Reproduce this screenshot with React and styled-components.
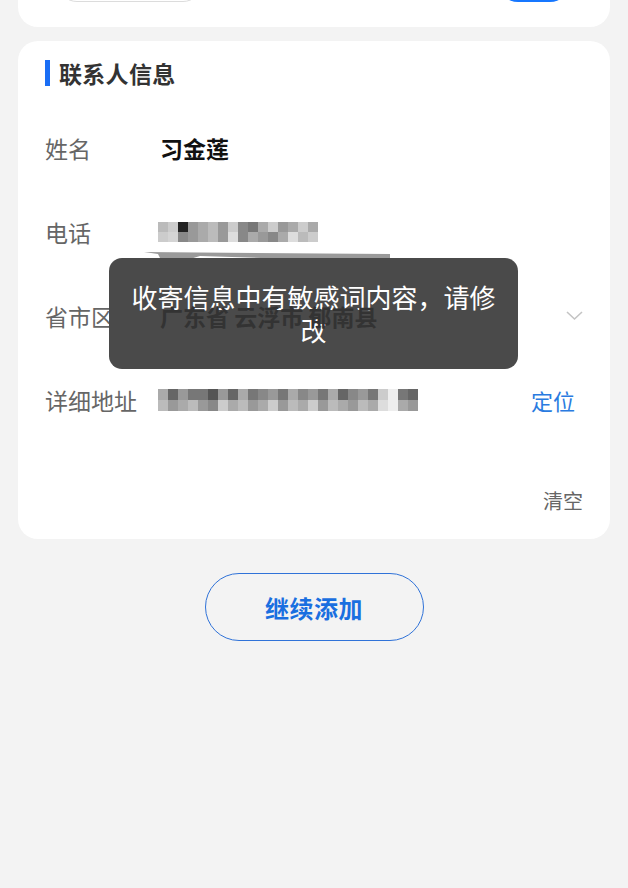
import React from "react";
import styled, { createGlobalStyle } from "styled-components";

const Global = createGlobalStyle`
  html, body { margin: 0; padding: 0; background: #f3f3f3; }
  body { font-family: "Noto Sans CJK SC", "Noto Sans", sans-serif; }
  * { box-sizing: border-box; }
`;

const Page = styled.div`
  position: relative;
  width: 628px;
  min-height: 888px;
  background: #f3f3f3;
  display: flex;
  flex-direction: column;
  align-items: stretch;
`;

const TopCard = styled.div`
  margin: 0 18px;
  height: 27px;
  background: #fff;
  border-radius: 0 0 20px 20px;
  overflow: hidden;
  display: flex;
  align-items: flex-end;
  justify-content: space-between;
  padding: 0 40px 25px 39px;
`;

const GhostPill = styled.div`
  width: 146px;
  height: 40px;
  border: 1.5px solid #dcdcdc;
  border-radius: 20px;
`;

const BluePill = styled.div`
  width: 72px;
  height: 40px;
  background: #1677ff;
  border-radius: 20px;
`;

const Card = styled.section`
  margin: 14px 18px 0;
  background: #fff;
  border-radius: 20px;
  padding: 19px 27px 26px;
  display: flex;
  flex-direction: column;
`;

const TitleRow = styled.div`
  display: flex;
  align-items: center;
  gap: 9px;
  height: 26px;
  margin-bottom: 20px;
`;

const TitleBar = styled.span`
  width: 5px;
  height: 26px;
  background: #1a6ef5;
`;

const Title = styled.h2`
  margin: 0;
  font-size: 23px;
  font-weight: 700;
  color: #333;
  line-height: 26px;
  letter-spacing: 0.3px;
`;

const Row = styled.div`
  display: flex;
  align-items: center;
  height: 84px;
`;

const Label = styled.span`
  width: 115px;
  flex: none;
  font-size: 23px;
  color: #666;
  line-height: 30px;
`;

const Value = styled.span`
  flex: 1;
  font-size: 23px;
  font-weight: 700;
  color: ${(p) => p.$color || "#111"};
  line-height: 30px;
  position: ${(p) => (p.$onTop ? "relative" : "static")};
  z-index: ${(p) => (p.$onTop ? 3 : "auto")};
`;

const Action = styled.span`
  font-size: 22px;
  color: #2a7be0;
  line-height: 30px;
  margin-right: 8px;
`;

const Mosaic = styled.div`
  position: relative;
  display: grid;
  grid-template-columns: repeat(${(p) => p.$cols}, ${(p) => p.$w}px);
  grid-auto-rows: ${(p) => p.$h}px;
  margin-left: -2px;
  width: max-content;
  box-shadow: 0 0 ${(p) => p.$glow}px ${(p) => p.$glow / 2}px rgba(255, 255, 255, 0.95);
`;

const Block = styled.span`
  background: ${(p) => p.$c};
`;

const Chevron = styled.svg`
  flex: none;
`;

const ClearRow = styled.div`
  display: flex;
  justify-content: flex-end;
  margin-top: 47px;
`;

const Clear = styled.span`
  font-size: 20px;
  color: #666;
  line-height: 24px;
`;

const Footer = styled.div`
  display: flex;
  justify-content: center;
  margin-top: 34px;
`;

const OutlineButton = styled.button`
  width: 219px;
  height: 68px;
  border: 1.8px solid #2f72d8;
  border-radius: 34px;
  background: transparent;
  font-family: inherit;
  font-size: 24px;
  font-weight: 700;
  color: #1a6fe0;
  letter-spacing: 0.5px;
`;

const Smear = styled.svg`
  position: absolute;
  left: 140px;
  top: 248px;
`;

const Toast = styled.div`
  position: absolute;
  z-index: 2;
  left: 109px;
  top: 258px;
  width: 409px;
  height: 111px;
  background: #4a4a4a;
  border-radius: 13px;
  color: #fff;
  font-size: 26px;
  line-height: 33px;
  text-align: center;
  padding: 22px 20px 0;
`;

const ToastText = styled.span`
  position: relative;
  z-index: 4;
`;

const phoneTop = ["#bbb", "#ccc", "#222", "#999", "#aaa", "#bbb", "#999", "#ccc", "#888", "#777", "#aaa", "#ccc", "#999", "#aaa", "#ccc", "#aaa"];
const phoneBottom = ["#ccc", "#d4d4d4", "#888", "#999", "#aaa", "#bbb", "#999", "#ddd", "#888", "#aaa", "#999", "#888", "#aaa", "#ddd", "#bbb", "#ccc"];

const addrTop = ["#aaa", "#666", "#999", "#777", "#777", "#555", "#999", "#666", "#aaa", "#777", "#888", "#999", "#777", "#aaa", "#888", "#999", "#777", "#aaa", "#666", "#888", "#999", "#777", "#ccc", "#eee", "#777", "#666"];
const addrBottom = ["#bbb", "#999", "#aaa", "#bbb", "#999", "#888", "#ccc", "#aaa", "#bbb", "#999", "#aaa", "#ccc", "#999", "#bbb", "#aaa", "#ccc", "#999", "#bbb", "#aaa", "#999", "#bbb", "#aaa", "#ddd", "#eee", "#aaa", "#999"];

export default function App() {
  return (
    <Page>
      <Global />
      <TopCard>
        <GhostPill />
        <BluePill />
      </TopCard>

      <Card>
        <TitleRow>
          <TitleBar />
          <Title>联系人信息</Title>
        </TitleRow>

        <Row>
          <Label>姓名</Label>
          <Value>习金莲</Value>
        </Row>

        <Row>
          <Label>电话</Label>
          <Mosaic $cols={16} $w={10} $h={10} $glow={20}>
            {phoneTop.concat(phoneBottom).map((c, i) => (
              <Block key={i} $c={c} />
            ))}
          </Mosaic>
        </Row>

        <Row>
          <Label>省市区</Label>
          <Value $color="#333" $onTop>广东省 云浮市 郁南县</Value>
          <Chevron width="17" height="10" viewBox="0 0 17 10">
            <polyline points="1,1 8.5,8 16,1" fill="none" stroke="#c4c4c4" strokeWidth="1.6" />
          </Chevron>
        </Row>

        <Row>
          <Label>详细地址</Label>
          <Value>
            <Mosaic $cols={26} $w={10} $h={11} $glow={6}>
              {addrTop.concat(addrBottom).map((c, i) => (
                <Block key={i} $c={c} />
              ))}
            </Mosaic>
          </Value>
          <Action>定位</Action>
        </Row>

        <ClearRow>
          <Clear>清空</Clear>
        </ClearRow>
      </Card>

      <Footer>
        <OutlineButton>继续添加</OutlineButton>
      </Footer>

      <Smear width="260" height="16" viewBox="0 0 260 16">
        <path d="M4 4 L250 6 L250 12 L150 11 L60 8 L40 14 L22 14 L18 6 Z" fill="#9a9a9a" />
      </Smear>

      <Toast>
        <ToastText>
          收寄信息中有敏感词内容，请修
          <br />
          改
        </ToastText>
      </Toast>
    </Page>
  );
}
